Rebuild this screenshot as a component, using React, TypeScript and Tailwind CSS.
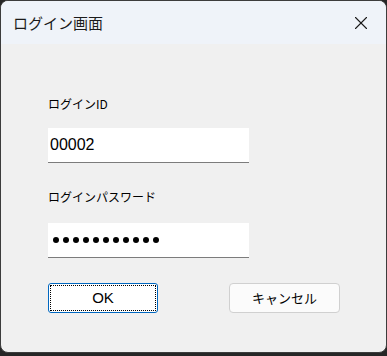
import { X } from 'lucide-react'

const jp = "font-['Noto_Sans_CJK_JP',sans-serif]"

const App = () => {
    return (
        <div className="w-[387px] h-[356px] bg-[#262626] flex flex-col">
            <div className="h-[353px] rounded-[8px] border border-[#3c3c3c] bg-[#f0f0f0] overflow-hidden flex flex-col">
                <div className="h-[43px] bg-[#eff3f9] flex items-center justify-between pl-[12px] pr-[14px] shrink-0">
                    <span className={`${jp} text-[15px] text-[#1b1b1b] leading-none`}>ログイン画面</span>
                    <X className="w-[22px] h-[22px] text-[#1b1b1b]" strokeWidth={1.2} />
                </div>

                <div className="flex flex-col pl-[47px] pt-[54px]">
                    <span className={`${jp} text-[12px] text-black leading-none`}>ログインID</span>
                    <div className="mt-[18px] w-[201px] h-[35px] bg-white border-b border-[#7c7c7c] flex items-center px-[2px] font-['Liberation_Sans',sans-serif] text-[16px] text-black">
                        00002
                    </div>

                    <span className={`${jp} text-[12px] text-black leading-none mt-[28px]`}>ログインパスワード</span>
                    <div className="mt-[20px] w-[201px] h-[35px] bg-white border-b border-[#7c7c7c] flex items-center gap-[4px] px-[5px]">
                        {Array.from({ length: 11 }).map((_, i) => (
                            <span key={i} className="w-[6px] h-[6px] rounded-full bg-black" />
                        ))}
                    </div>

                    <div className="mt-[25px] flex items-center gap-[71px]">
                        <button
                            type="button"
                            className="w-[110px] h-[30px] rounded-[3px] border border-[#0067c0] bg-white p-[1px]"
                        >
                            <div className="w-full h-full border border-dotted border-black flex items-center justify-center font-['Liberation_Sans',sans-serif] text-[15px] text-black">
                                OK
                            </div>
                        </button>
                        <button
                            type="button"
                            className={`w-[111px] h-[30px] rounded-[4px] border border-[#d0d0d0] bg-[#fbfbfb] flex items-center justify-center ${jp} text-[13px] text-black`}
                        >
                            キャンセル
                        </button>
                    </div>
                </div>
            </div>
        </div>
    )
}

export default App
